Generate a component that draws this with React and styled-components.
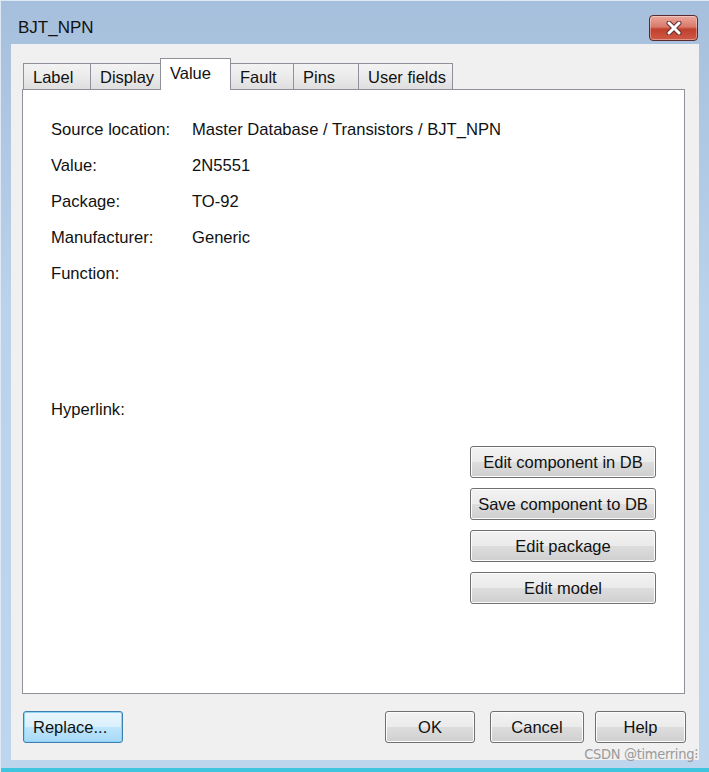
import React from 'react'
import styled, { createGlobalStyle } from 'styled-components'

const Global = createGlobalStyle`
  html, body { margin: 0; padding: 0; background: #fff; }
  body { font-family: "Liberation Sans", Arial, sans-serif; }
`

const Window = styled.div`
  position: relative;
  width: 709px;
  height: 772px;
  box-sizing: border-box;
  background: linear-gradient(180deg, #a6bfdc 0%, #bad2eb 40%, #bed5ee 100%);
  border-top: 1px solid #dfe9f5;
  border-left: 1px solid #dfe9f5;
  display: flex;
  flex-direction: column;
  overflow: hidden;
`

const TitleBar = styled.div`
  height: 43px;
  display: flex;
  align-items: center;
  justify-content: space-between;
  padding: 0 11px 0 17px;
`

const Title = styled.div`
  font-size: 17px;
  color: #111;
  margin-top: 10px;
`

const CloseButton = styled.div`
  width: 47px;
  height: 24px;
  margin-top: 10px;
  border: 1px solid #5a2a32;
  border-radius: 4px;
  background: linear-gradient(180deg, #eaa89c 0%, #d97a6a 45%, #c0412e 55%, #cf5a45 100%);
  box-shadow: inset 0 0 0 1px rgba(255, 255, 255, 0.35);
  display: flex;
  align-items: center;
  justify-content: center;
`

const Body = styled.div`
  margin: 0 10px 0 10px;
  height: 716px;
  background: #f0f0f0;
  display: flex;
  flex-direction: column;
  padding: 14px 14px 0 11px;
  box-sizing: border-box;
`

const BottomEdge = styled.div`
  margin-top: auto;
  height: 4px;
  background: #3fc5dd;
`

const TabRow = styled.div`
  display: flex;
  align-items: flex-end;
  padding-left: 1px;
  height: 32px;
  margin-bottom: -1px;
  position: relative;
  z-index: 1;
`

const Tab = styled.div`
  box-sizing: border-box;
  width: ${p => p.w}px;
  height: ${p => (p.active ? 32 : 27)}px;
  border: 1px solid #8e9199;
  border-bottom: ${p => (p.active ? 'none' : '1px solid #8e9199')};
  margin-left: ${p => (p.first ? 0 : -1)}px;
  background: ${p =>
    p.active ? '#ffffff' : 'linear-gradient(180deg, #f3f3f3 0%, #ebebeb 50%, #dedede 100%)'};
  font-size: 16.5px;
  color: #111;
  padding: ${p => (p.active ? '5px' : '4px')} 0 0 9px;
  position: relative;
  z-index: ${p => (p.active ? 2 : 0)};
`

const Panel = styled.div`
  box-sizing: border-box;
  height: 605px;
  background: #fff;
  border: 1px solid #8e9199;
  padding: 22px 28px 0 28px;
  display: flex;
  flex-direction: column;
`

const Row = styled.div`
  display: flex;
  align-items: center;
  height: 36px;
  font-size: 16.6px;
  color: #111;
  margin-bottom: ${p => p.after || 0}px;
`

const Label = styled.div`
  width: 141px;
  flex-shrink: 0;
`

const Value = styled.div``

const ActionColumn = styled.div`
  display: flex;
  flex-direction: column;
  align-items: flex-end;
  gap: 10px;
  margin-top: 18px;
`

const Button = styled.button`
  box-sizing: border-box;
  width: ${p => p.w}px;
  height: 32px;
  padding: 0;
  margin-left: ${p => p.ml || 0}px;
  font-family: "Liberation Sans", Arial, sans-serif;
  font-size: 16.5px;
  color: #111;
  border-radius: 3px;
  border: 1px solid ${p => (p.focused ? '#3c7fb1' : '#707070')};
  background: ${p =>
    p.focused
      ? 'linear-gradient(180deg, #eaf6fd 0%, #d9f0fc 50%, #bee6fd 51%, #a7d9f5 100%)'
      : 'linear-gradient(180deg, #f2f2f2 0%, #ebebeb 50%, #dddddd 51%, #cfcfcf 100%)'};
  box-shadow: inset 0 0 0 1px ${p => (p.focused ? '#8fd3f5' : '#fcfcfc')};
  text-align: ${p => (p.left ? 'left' : 'center')};
  padding-left: ${p => (p.left ? 9 : 0)}px;
`

const Footer = styled.div`
  display: flex;
  align-items: center;
  margin-top: 17px;
  padding-left: 1px;
  margin-right: -1px;
`

const FooterRight = styled.div`
  margin-left: auto;
  display: flex;
  align-items: center;
`

const Watermark = styled.div`
  position: absolute;
  right: 11px;
  bottom: 10px;
  font-family: "DejaVu Sans Condensed", "Liberation Sans Narrow", sans-serif;
  font-size: 14.5px;
  color: #9a9a9a;
  letter-spacing: -0.3px;
`

const tabs = [
  { name: 'Label', w: 68 },
  { name: 'Display', w: 71 },
  { name: 'Value', w: 71, active: true },
  { name: 'Fault', w: 64 },
  { name: 'Pins', w: 66 },
  { name: 'User fields', w: 95 }
]

const props = [
  ['Source location:', 'Master Database / Transistors / BJT_NPN'],
  ['Value:', '2N5551'],
  ['Package:', 'TO-92'],
  ['Manufacturer:', 'Generic'],
  ['Function:', '', 100],
  ['Hyperlink:', '']
]

function CloseIcon() {
  return (
    <svg width="20" height="14" viewBox="0 0 20 14">
      <path d="M5 2 L15 12 M15 2 L5 12" stroke="#6a2b2b" strokeWidth="5" strokeLinecap="round" />
      <path d="M5 2 L15 12 M15 2 L5 12" stroke="#ffffff" strokeWidth="3" strokeLinecap="round" />
    </svg>
  )
}

export default function App() {
  return (
    <>
      <Global />
      <Window>
        <TitleBar>
          <Title>BJT_NPN</Title>
          <CloseButton>
            <CloseIcon />
          </CloseButton>
        </TitleBar>
        <Body>
          <TabRow>
            {tabs.map((t, i) => (
              <Tab key={t.name} w={t.w} active={t.active} first={i === 0}>
                {t.name}
              </Tab>
            ))}
          </TabRow>
          <Panel>
            {props.map(([k, v, after]) => (
              <Row key={k} after={after}>
                <Label>{k}</Label>
                <Value>{v}</Value>
              </Row>
            ))}
            <ActionColumn>
              <Button w={186}>Edit component in DB</Button>
              <Button w={186}>Save component to DB</Button>
              <Button w={186}>Edit package</Button>
              <Button w={186}>Edit model</Button>
            </ActionColumn>
          </Panel>
          <Footer>
            <Button w={100} focused left>Replace...</Button>
            <FooterRight>
              <Button w={90}>OK</Button>
              <Button w={94} ml={15}>Cancel</Button>
              <Button w={91} ml={11}>Help</Button>
            </FooterRight>
          </Footer>
        </Body>
        <BottomEdge />
        <Watermark>CSDN @timerring⁝</Watermark>
      </Window>
    </>
  )
}
